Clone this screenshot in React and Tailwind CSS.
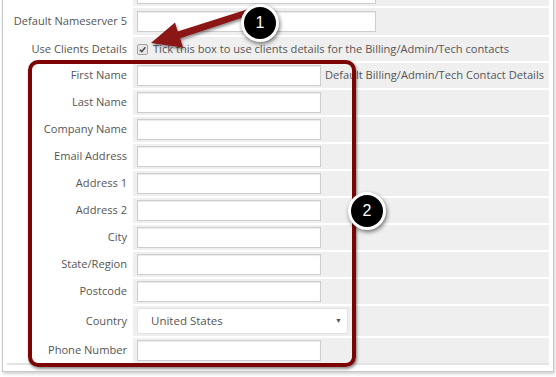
import React from 'react';

const Field = ({ w = 'w-[184px]' }) => (
  <div className={`${w} h-[21px] bg-white border border-[#cdcdcd] shadow-[inset_0_1px_1px_rgba(0,0,0,0.08)]`}></div>
);

const Row = ({ label, h = 'h-[25px]', children }) => (
  <div className={`flex ${h}`}>
    <div className="w-[126px] shrink-0 flex items-center justify-end pr-[6px] text-[11.1px] text-[#555] whitespace-nowrap">
      {label}
    </div>
    <div className="flex-1 bg-[#efefef] flex items-center pl-[4px]">{children}</div>
  </div>
);

const Badge = ({ n, className }) => (
  <div
    className={`absolute w-[38px] h-[38px] rounded-full bg-black border-[3px] border-white shadow-[1px_2px_4px_rgba(0,0,0,0.55)] flex items-center justify-center text-white text-[16px] font-['Liberation_Sans',sans-serif] ${className}`}
  >
    {n}
  </div>
);

export default function App() {
  const fields = ['Last Name', 'Company Name', 'Email Address', 'Address 1', 'Address 2', 'City', 'State/Region', 'Postcode'];

  return (
    <div className="relative w-[556px] h-[377px] overflow-hidden bg-white font-['Open_Sans',sans-serif]">
      {/* form panel */}
      <div className="mt-[-24px] mx-[2px] border border-[#c8c8c8] bg-white px-[4px] pt-[4px] pb-[6px] shadow-[1px_2px_3px_rgba(0,0,0,0.18)]">
        <div className="flex flex-col gap-[2px] border-b-2 border-[#e4e4e4]">
          <Row label="">
            <Field w="w-[239px]" />
          </Row>
          <Row label="Default Nameserver 5" h="h-[27px]">
            <Field w="w-[239px]" />
          </Row>
          <Row label="Use Clients Details" h="h-[24px]">
            <span className="w-[11px] h-[11px] border border-[#a0a0a0] rounded-[2px] bg-[#e8e8e8] flex items-center justify-center">
              <svg width="9" height="9" viewBox="0 0 10 10">
                <path d="M2 5.2 L4.2 7.4 L8.2 2.6" fill="none" stroke="#4a4a4a" strokeWidth="1.7" />
              </svg>
            </span>
            <span className="ml-[5px] text-[11.1px] text-[#555] whitespace-nowrap">
              Tick this box to use clients details for the Billing/Admin/Tech contacts
            </span>
          </Row>
          <Row label="First Name" h="h-[25px]">
            <Field />
            <span className="ml-[4px] text-[11.1px] text-[#555] whitespace-nowrap">Default Billing/Admin/Tech Contact Details</span>
          </Row>
          {fields.map((f) => (
            <Row key={f} label={f}>
              <Field />
            </Row>
          ))}
          <Row label="Country" h="h-[30px]">
            <div className="w-[211px] h-[26px] bg-white border border-[#e2e2e2] rounded-[3px] flex items-center justify-between pl-[13px] pr-[5px] text-[11.5px] text-[#555]">
              <span>United States</span>
              <span className="text-[7px] text-[#555]">▼</span>
            </div>
          </Row>
          <Row label="Phone Number">
            <Field />
          </Row>
        </div>
      </div>

      {/* annotation: highlight box */}
      <div className="absolute left-[28px] top-[60px] w-[328px] h-[307px] border-[4px] border-[#7c0404] rounded-[10px] shadow-[1px_2px_3px_rgba(0,0,0,0.45)]"></div>

      {/* annotation: arrow */}
      <svg className="absolute left-0 top-0" width="556" height="377">
        <defs>
          <filter id="sh" x="-20%" y="-20%" width="140%" height="160%">
            <feDropShadow dx="1" dy="2" stdDeviation="1.5" floodColor="#000" floodOpacity="0.45" />
          </filter>
        </defs>
        <polygon
          points="151,43 175,22.5 177.6,31.5 250,8.5 251.8,14.5 180.1,38.3 183,47.5"
          fill="#8a1212"
          filter="url(#sh)"
        />
      </svg>

      <Badge n="1" className="left-[241px] top-[4px]" />
      <Badge n="2" className="left-[348px] top-[192px]" />
    </div>
  );
}
